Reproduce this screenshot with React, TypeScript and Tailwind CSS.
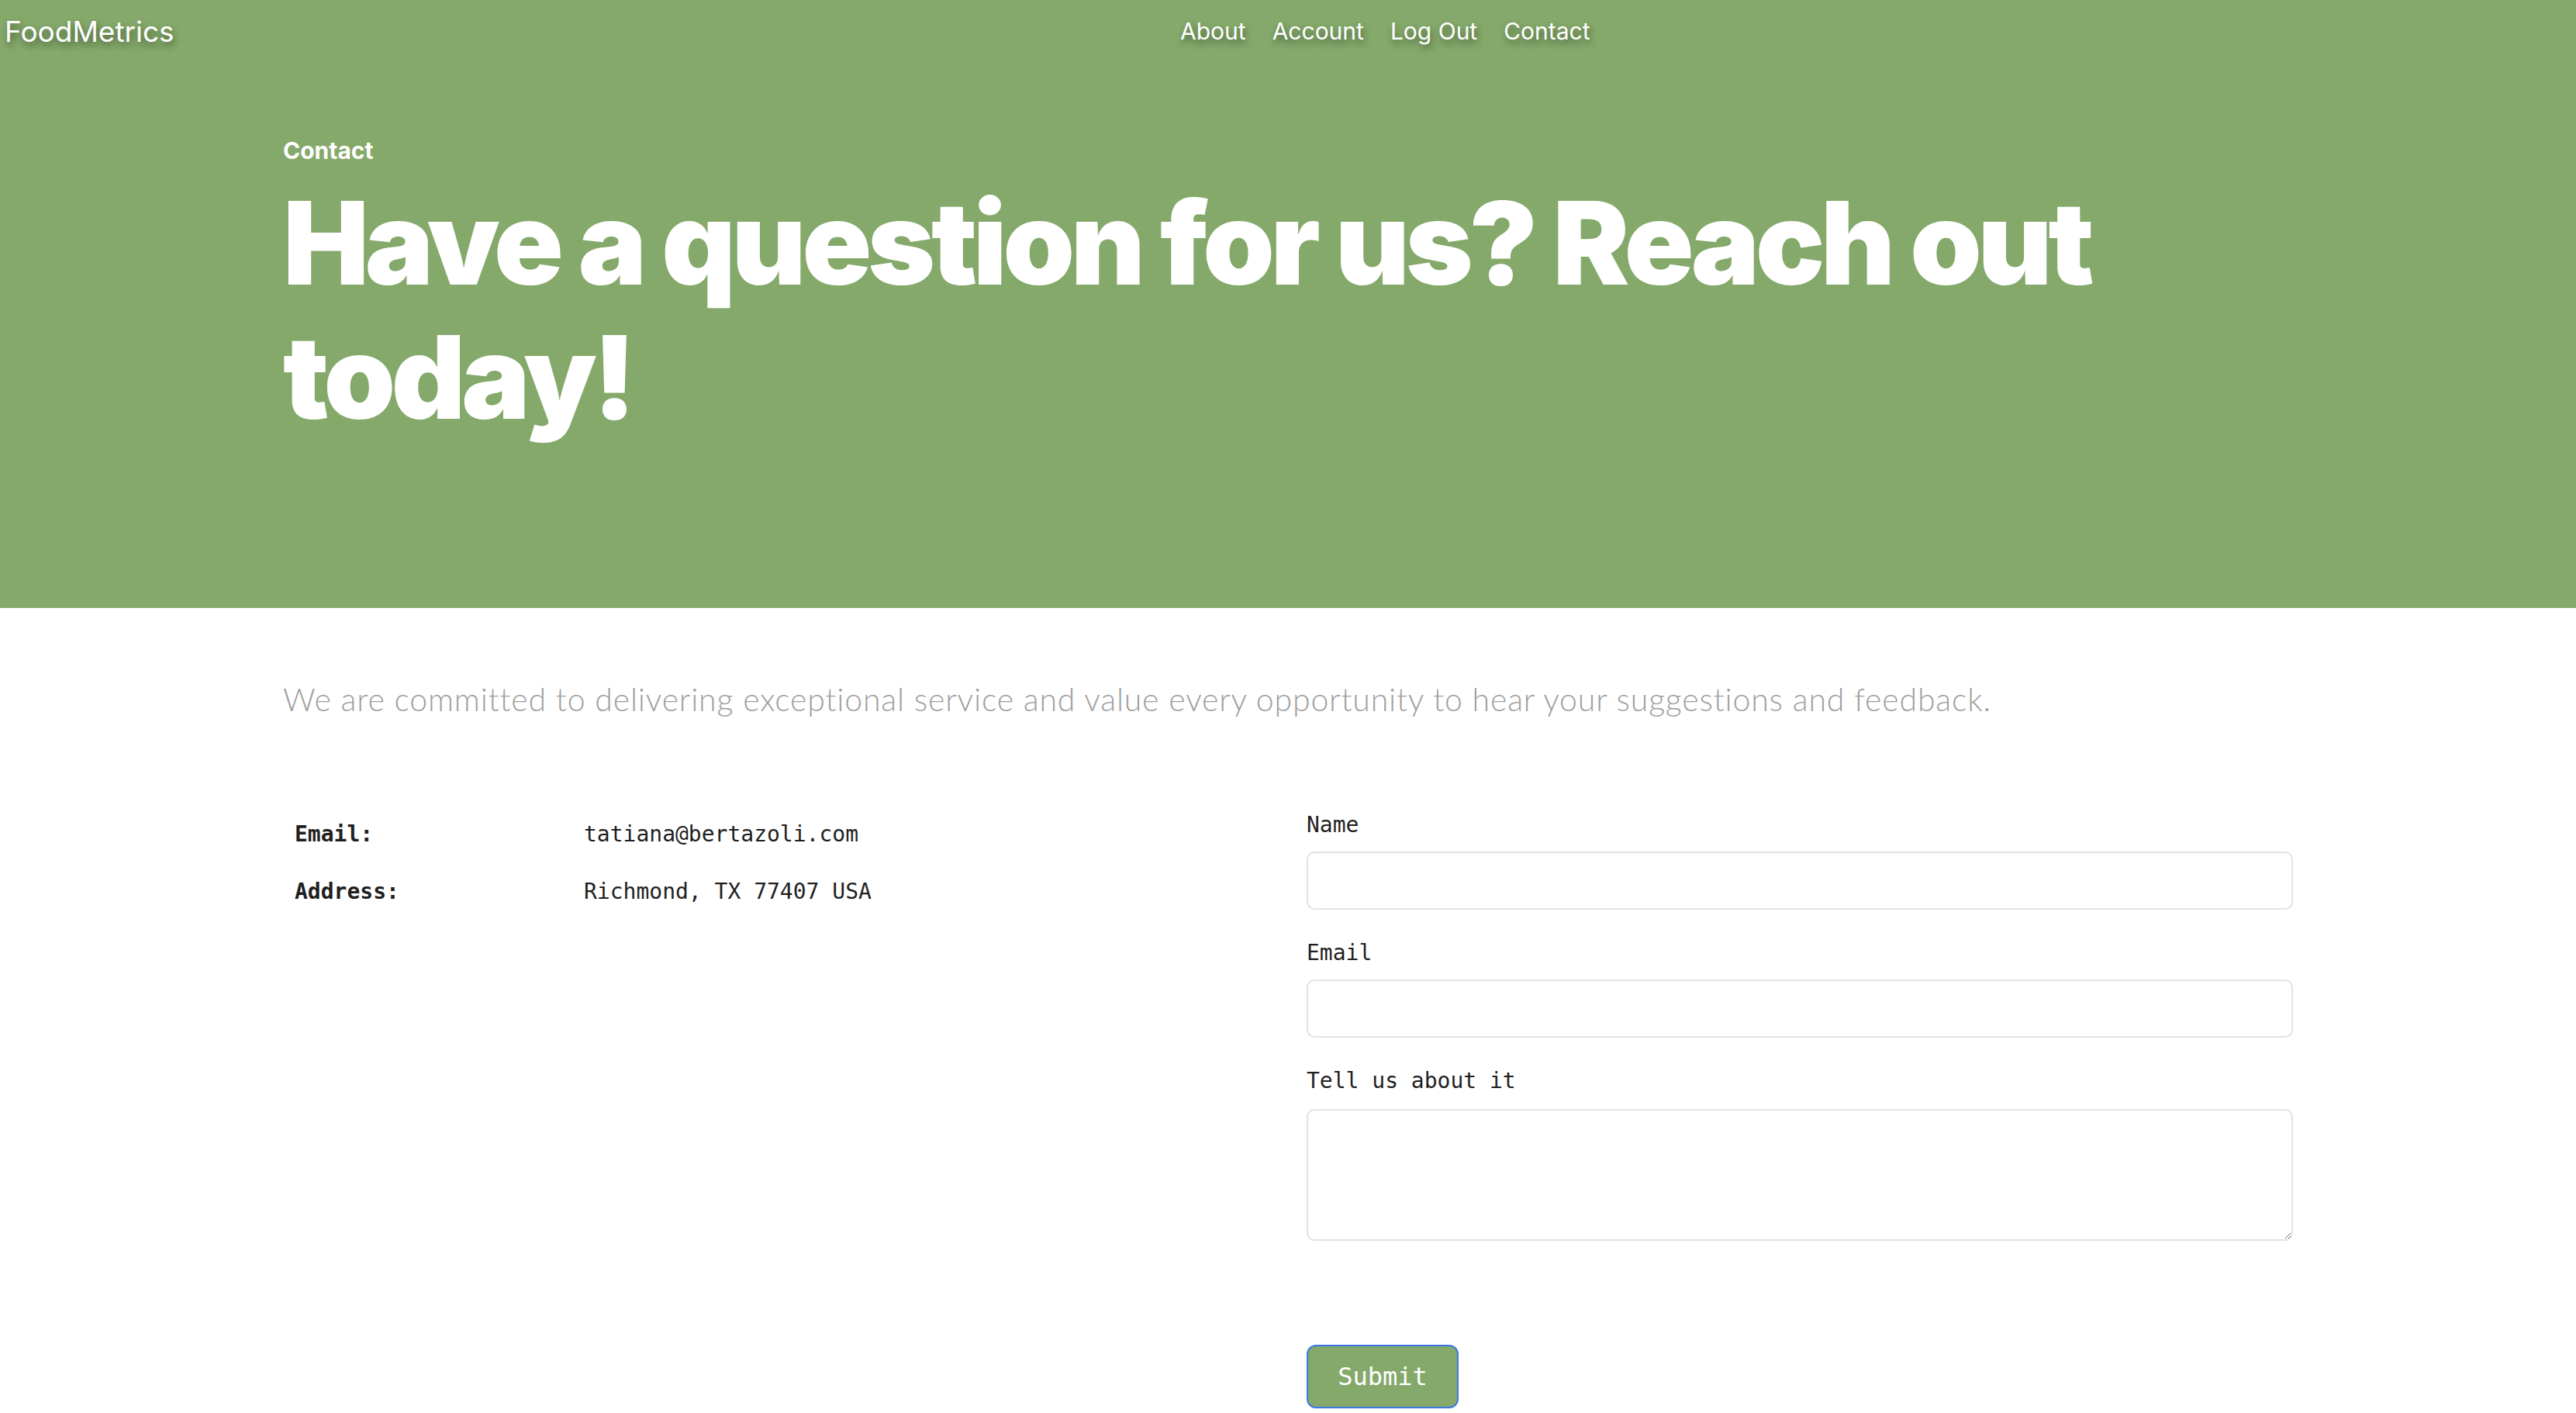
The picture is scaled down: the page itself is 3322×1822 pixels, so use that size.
import React from "react";

const shadow = "[text-shadow:2px_5px_10px_rgba(0,0,0,0.45)]";

export default function App() {
  return (
    <div className="min-h-screen bg-white font-['Inter',sans-serif]">
      <header className="h-[784px] bg-[#84a96a]">
        <nav className="flex h-[80px] items-center justify-between pl-[6px]">
          <a href="#" className={`text-[37px] leading-none text-white ${shadow}`}>
            FoodMetrics
          </a>
          <ul className="flex gap-[34px] pl-[26px] text-[30px] leading-none text-white">
            {["About", "Account", "Log Out", "Contact"].map((l) => (
              <li key={l} className={shadow}>
                {l}
              </li>
            ))}
          </ul>
          <span />
        </nav>
        <div className="mx-auto w-[2592px] pt-[96px] text-white">
          <p className="text-[30px] font-bold leading-[36px]">Contact</p>
          <h1 className="mt-[15px] text-[148px] font-black leading-[173px] tracking-[-0.035em]">
            Have a question for us? Reach out today!
          </h1>
        </div>
      </header>

      <main className="mx-auto w-[2592px]">
        <p className="mt-[88px] font-['Lato',sans-serif] text-[41px] font-light leading-[60px] tracking-[0.02em] text-[#9e9e9e]">
          We are committed to delivering exceptional service and value every opportunity to hear your suggestions and feedback.
        </p>

        <div className="mt-[107px] grid grid-cols-2 gap-[48px] font-['DejaVu_Sans_Mono',monospace] text-[28px] text-[#1f1f1f]">
          <table className="self-start">
            <tbody>
              <tr className="h-[74px]">
                <td className="w-[388px] pl-[15px] font-bold">Email:</td>
                <td>tatiana@bertazoli.com</td>
              </tr>
              <tr className="h-[74px]">
                <td className="pl-[15px] font-bold">Address:</td>
                <td>Richmond, TX 77407 USA</td>
              </tr>
            </tbody>
          </table>

          <form className="flex flex-col">
            <label className="mb-[13px] pt-[4px] leading-[42px]">Name</label>
            <input className="mb-[31px] h-[75px] rounded-[10px] border-2 border-[#dfe3e8]" />
            <label className="mb-[13px] pt-[4px] leading-[42px]">Email</label>
            <input className="mb-[31px] h-[75px] rounded-[10px] border-2 border-[#dfe3e8]" />
            <label className="mb-[15px] pt-[4px] leading-[42px]">Tell us about it</label>
            <textarea className="h-[170px] rounded-[10px] border-2 border-[#dfe3e8]" />
            <button
              type="button"
              className="mt-[134px] h-[82px] w-[196px] rounded-[12px] border-2 border-[#3a78e6] bg-[#84a96a] text-[32px] text-white"
            >
              Submit
            </button>
          </form>
        </div>
      </main>
    </div>
  );
}
